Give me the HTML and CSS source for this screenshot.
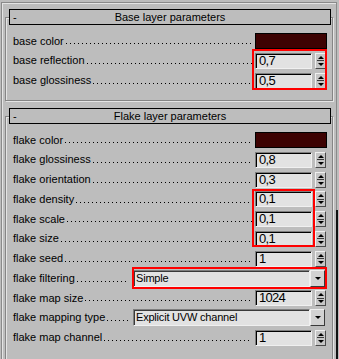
FILE: index.html
```html
<!DOCTYPE html>
<html lang="en">
<head>
    <meta charset="UTF-8">
    <title>Car paint parameters</title>
    <link rel="stylesheet" href="styles.css">
</head>
<body>
    <div class="panel">
        <div class="rollout">
            <div class="rollout-head"><span class="toggle">-</span><span class="title">Base layer parameters</span></div>
            <div class="rows">
                <div class="row"><span class="label">base color</span><span class="leader"></span><span class="ctrl"><span class="swatch"></span></span></div>
                <div class="row"><span class="label">base reflection</span><span class="leader"></span><span class="ctrl"><span class="field">0,7</span><span class="spin"></span></span></div>
                <div class="row"><span class="label">base glossiness</span><span class="leader"></span><span class="ctrl"><span class="field">0,5</span><span class="spin"></span></span></div>
            </div>
        </div>

        <div class="rollout">
            <div class="rollout-head"><span class="toggle">-</span><span class="title">Flake layer parameters</span></div>
            <div class="rows rows-long">
                <div class="row"><span class="label">flake color</span><span class="leader"></span><span class="ctrl"><span class="swatch"></span></span></div>
                <div class="row"><span class="label">flake glossiness</span><span class="leader"></span><span class="ctrl"><span class="field">0,8</span><span class="spin"></span></span></div>
                <div class="row"><span class="label">flake orientation</span><span class="leader"></span><span class="ctrl"><span class="field">0,3</span><span class="spin"></span></span></div>
                <div class="row"><span class="label">flake density</span><span class="leader"></span><span class="ctrl"><span class="field">0,1</span><span class="spin"></span></span></div>
                <div class="row"><span class="label">flake scale</span><span class="leader"></span><span class="ctrl"><span class="field">0,1</span><span class="spin"></span></span></div>
                <div class="row"><span class="label">flake size</span><span class="leader"></span><span class="ctrl"><span class="field">0,1</span><span class="spin"></span></span></div>
                <div class="row"><span class="label">flake seed</span><span class="leader"></span><span class="ctrl"><span class="field">1</span><span class="spin"></span></span></div>
                <div class="row row-combo"><span class="label">flake filtering</span><span class="leader"></span><span class="combo"><span class="combo-field">Simple</span><span class="combo-btn"></span></span></div>
                <div class="row"><span class="label">flake map size</span><span class="leader"></span><span class="ctrl"><span class="field">1024</span><span class="spin"></span></span></div>
                <div class="row row-combo"><span class="label">flake mapping type</span><span class="leader"></span><span class="combo"><span class="combo-field">Explicit UVW channel</span><span class="combo-btn"></span></span></div>
                <div class="row"><span class="label">flake map channel</span><span class="leader"></span><span class="ctrl"><span class="field">1</span><span class="spin"></span></span></div>
            </div>
        </div>
    </div>

    <!-- red annotation frames and the panel scroll thumb sit on top -->
    <div class="mark mark-base"></div>
    <div class="mark mark-flake"></div>
    <div class="mark mark-filter"></div>
    <div class="scroll-thumb"></div>
</body>
</html>
```

FILE: styles.css
```css
html, body {
    margin: 0;
    height: 100%;
    overflow: hidden;
}
body {
    position: relative;
    background-color: #bdbdbd;
    font-family: "Liberation Sans", Arial, sans-serif;
    font-size: 11px;
    color: #000;
}
.panel {
    margin: 2px 2px 0 1px;
    padding: 0 3px;
    height: 420px;
    border: 1px solid #8a8a8a;
    border-bottom: none;
    box-shadow: inset 1px 1px 0 #e4e4e4;
}
.rollout {
    margin-top: 14px;
    border: 1px solid #858585;
    box-shadow: inset 1px 1px 0 #e4e4e4, 1px 1px 0 #e4e4e4;
}
.rollout + .rollout {
    margin-top: 15px;
}
.rollout-head {
    margin: -9px 1px 0 3px;
    height: 16px;
    box-sizing: border-box;
    border: 1px solid #000;
    background-color: #bdbdbd;
    display: grid;
    grid-template-columns: 1fr auto 1fr;
    align-items: center;
    line-height: 14px;
}
.toggle {
    padding-left: 3px;
}
.rows {
    padding: 6.25px 5px 9.5px 7px;
}
.rows-long {
    padding-bottom: 30px;
}
.row {
    display: flex;
    align-items: center;
    height: 19.75px;
}
.label {
    white-space: nowrap;
    line-height: 13px;
}
.leader {
    flex: 1;
    align-self: stretch;
    margin: 0 3px 0 1px;
    background-image: linear-gradient(to right, #000 1px, transparent 1px);
    background-size: 4px 1px;
    background-repeat: repeat-x;
    background-position: 1px 12px;
}
.row-combo .leader {
    margin-right: 4px;
}
.ctrl {
    width: 72px;
    display: flex;
    gap: 3px;
}
.swatch {
    width: 72px;
    height: 16px;
    box-sizing: border-box;
    border: 1px solid #000;
    background-color: #3d0202;
}
.field, .combo-field {
    box-sizing: border-box;
    background-color: #e2e2e2;
    border: 1px solid;
    border-color: #7e7e7e #f0f0f0 #f0f0f0 #7e7e7e;
    box-shadow: inset 1px 1px 0 #000;
    white-space: nowrap;
}
.field {
    width: 57px;
    height: 16px;
    padding-left: 3px;
    font-size: 13px;
    letter-spacing: -0.7px;
    line-height: 14px;
}
.spin {
    width: 11px;
    height: 16px;
    box-sizing: border-box;
    border: 1px solid;
    border-color: #f0f0f0 #4a4a4a #4a4a4a #f0f0f0;
    background: #c6c6c6 linear-gradient(#3a3a3a, #3a3a3a) center / 7px 1px no-repeat;
    display: flex;
    flex-direction: column;
    align-items: center;
    justify-content: space-around;
}
.spin::before, .spin::after {
    content: "";
    width: 0;
    border-left: 3px solid transparent;
    border-right: 3px solid transparent;
}
.spin::before {
    border-bottom: 3px solid #000;
}
.spin::after {
    border-top: 3px solid #000;
}
.combo {
    width: 192px;
    height: 17px;
    margin-right: 2px;
    display: flex;
}
.combo-field {
    flex: 1;
    padding-left: 2px;
    font-size: 11px;
    letter-spacing: -0.2px;
    line-height: 14px;
    box-shadow: inset 1px 1px 0 #3a3a3a;
}
.combo-btn {
    width: 15px;
    box-sizing: border-box;
    border: 1px solid;
    border-color: #f0f0f0 #3a3a3a #3a3a3a #f0f0f0;
    background-color: #d2d2d2;
    display: flex;
    align-items: center;
    justify-content: center;
}
.combo-btn::after {
    content: "";
    width: 0;
    border-left: 3px solid transparent;
    border-right: 3px solid transparent;
    border-top: 3px solid #000;
}
.mark {
    position: absolute;
    box-sizing: border-box;
    border: 2px solid #ff0000;
}
.mark-base {
    left: 252px;
    top: 49px;
    width: 75px;
    height: 41px;
}
.mark-flake {
    left: 252px;
    top: 189px;
    width: 63px;
    height: 58px;
}
.mark-filter {
    left: 132px;
    top: 267px;
    width: 195px;
    height: 22px;
}
.scroll-thumb {
    position: absolute;
    left: 336px;
    top: 210px;
    bottom: 0;
    width: 2px;
    background-color: #111;
}
```
